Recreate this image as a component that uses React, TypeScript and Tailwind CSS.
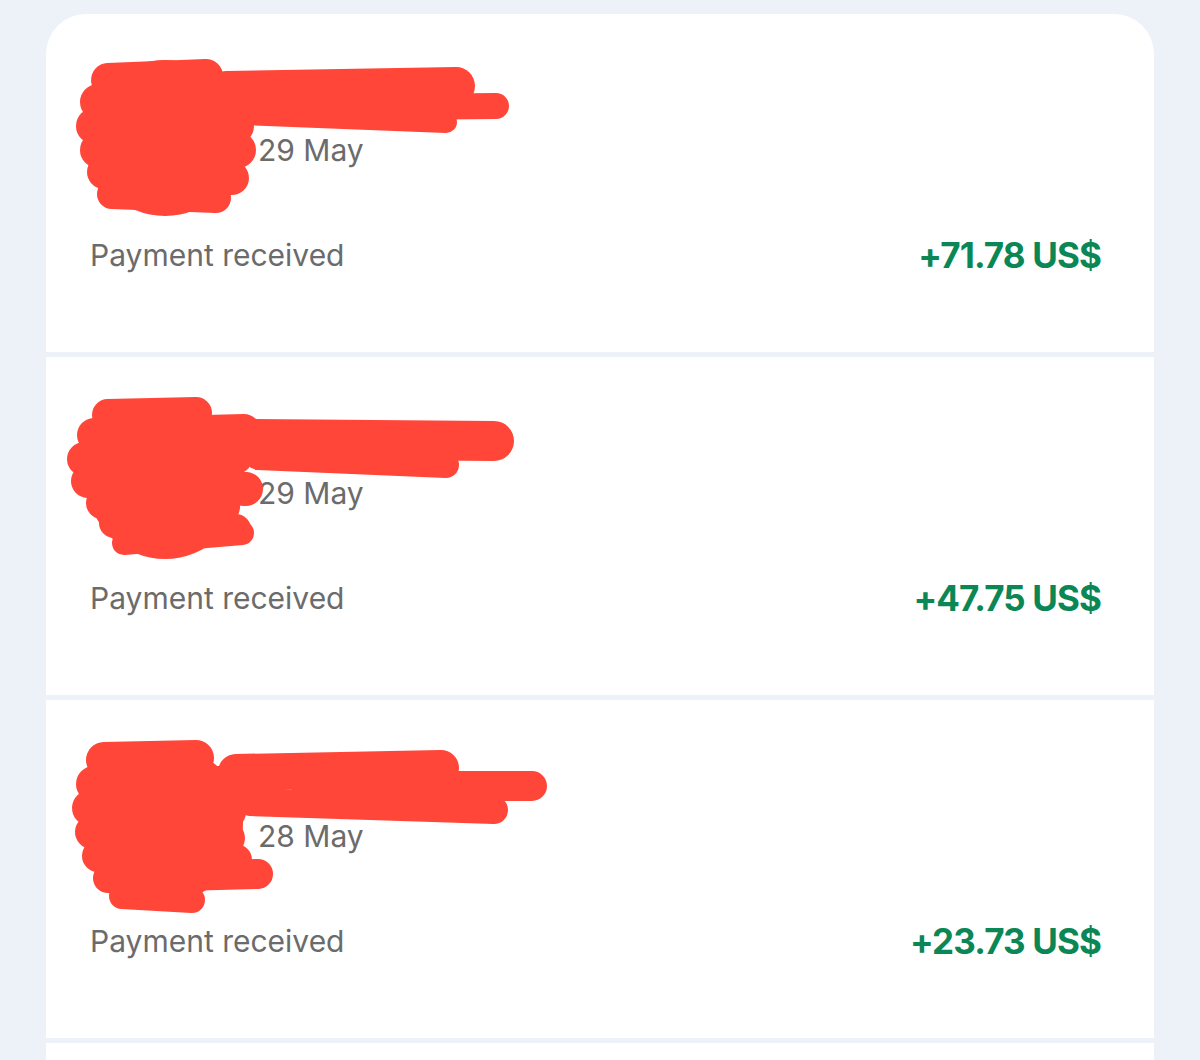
import React from 'react';

type Stroke = [number, number, number, number, number];

type Tx = {
  date: string;
  amount: string;
  strokes: Stroke[];
};

// red marker scribbles hiding avatar + name, coords local to the row
const txs: Tx[] = [
  {
    date: '29 May',
    amount: '+71.78 US$',
    strokes: [
      [62, 66, 160, 62, 34],
      [52, 88, 186, 86, 36],
      [48, 112, 190, 112, 36],
      [52, 136, 192, 136, 36],
      [58, 158, 186, 164, 34],
      [66, 180, 170, 184, 30],
      [180, 76, 410, 72, 38],
      [250, 94, 450, 92, 26],
      [196, 100, 400, 108, 22],
    ],
  },
  {
    date: '29 May',
    amount: '+47.75 US$',
    strokes: [
      [62, 58, 150, 56, 32],
      [48, 78, 198, 74, 34],
      [38, 102, 190, 100, 34],
      [42, 124, 200, 132, 34],
      [56, 146, 178, 150, 32],
      [68, 166, 190, 172, 30],
      [78, 186, 196, 176, 24],
      [200, 82, 448, 84, 40],
      [212, 100, 400, 108, 26],
    ],
  },
  {
    date: '28 May',
    amount: '+23.73 US$',
    strokes: [
      [58, 60, 150, 58, 36],
      [48, 84, 190, 84, 36],
      [44, 108, 182, 112, 36],
      [46, 132, 182, 138, 34],
      [52, 156, 190, 160, 32],
      [62, 178, 212, 174, 30],
      [76, 196, 146, 200, 26],
      [190, 72, 395, 68, 36],
      [260, 86, 486, 86, 30],
      [204, 102, 448, 110, 28],
    ],
  },
];

const Scribble: React.FC<{ strokes: Stroke[] }> = ({ strokes }) => (
  <svg className="absolute left-0 top-0" width="560" height="240" viewBox="0 0 560 240" fill="none">
    <circle cx="119" cy="124" r="78" fill="#ff4639" />
    {strokes.map(([x1, y1, x2, y2, w], i) => (
      <path key={i} d={`M${x1} ${y1} L${x2} ${y2}`} stroke="#ff4639" strokeWidth={w} strokeLinecap="round" />
    ))}
  </svg>
);

const Row: React.FC<{ tx: Tx }> = ({ tx }) => (
  <div className="relative h-[338px] bg-white pl-[44px] pr-[53px] pt-[49px]">
    <div className="flex items-start gap-[18px]">
      <div className="h-[150px] w-[150px] shrink-0 rounded-full bg-[#1c1c1c]" />
      <div className="flex flex-col pt-[14px]">
        <div className="h-[36px]" />
        <span className="mt-[19px] text-[30px] leading-[36px] text-[#6b6b6b]">{tx.date}</span>
      </div>
    </div>
    <div className="mt-[24px] flex items-center justify-between">
      <span className="text-[30px] leading-[36px] text-[#6b6b6b]">Payment received</span>
      <span className="text-[35px] font-bold leading-[36px] tracking-tight text-[#0b8655]">{tx.amount}</span>
    </div>
    <Scribble strokes={tx.strokes} />
  </div>
);

export default function App() {
  return (
    <div
      className="h-[1060px] overflow-hidden bg-[#edf1f8] px-[46px] pt-[14px]"
      style={{ fontFamily: 'Inter, "Noto Sans", sans-serif' }}
    >
      <div className="flex flex-col gap-[5px] overflow-hidden rounded-t-[40px]">
        {txs.map((tx, i) => (
          <Row key={i} tx={tx} />
        ))}
        <div className="h-[60px] bg-white" />
      </div>
    </div>
  );
}
